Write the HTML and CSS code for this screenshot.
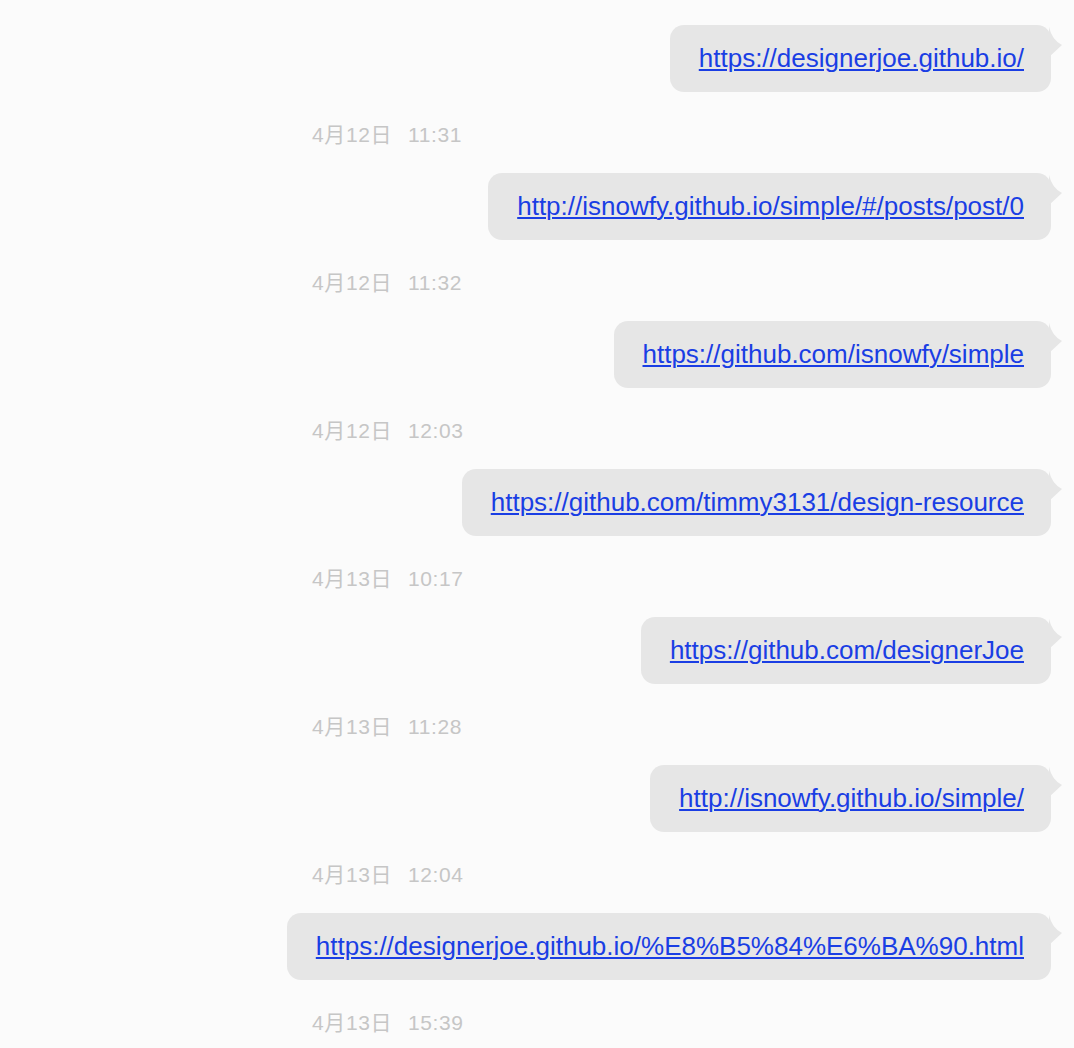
FILE: index.html
```html
<!DOCTYPE html>
<html lang="zh">
<head>
<meta charset="utf-8">
<link rel="stylesheet" href="styles.css">
</head>
<body>
<div class="chat">
  <div class="item">
    <div class="row"><div class="bubble"><a href="#">https://designerjoe.github.io/</a><svg class="tail" width="14" height="30" viewBox="0 0 14 30"><path d="M0 0 Q3 13 13 18 L0 30 Z" fill="#e6e6e6"/></svg></div></div>
    <div class="time"><span>4月12日</span><span>11:31</span></div>
  </div>
  <div class="item">
    <div class="row"><div class="bubble"><a href="#">http://isnowfy.github.io/simple/#/posts/post/0</a><svg class="tail" width="14" height="30" viewBox="0 0 14 30"><path d="M0 0 Q3 13 13 18 L0 30 Z" fill="#e6e6e6"/></svg></div></div>
    <div class="time"><span>4月12日</span><span>11:32</span></div>
  </div>
  <div class="item">
    <div class="row"><div class="bubble"><a href="#">https://github.com/isnowfy/simple</a><svg class="tail" width="14" height="30" viewBox="0 0 14 30"><path d="M0 0 Q3 13 13 18 L0 30 Z" fill="#e6e6e6"/></svg></div></div>
    <div class="time"><span>4月12日</span><span>12:03</span></div>
  </div>
  <div class="item">
    <div class="row"><div class="bubble"><a href="#">https://github.com/timmy3131/design-resource</a><svg class="tail" width="14" height="30" viewBox="0 0 14 30"><path d="M0 0 Q3 13 13 18 L0 30 Z" fill="#e6e6e6"/></svg></div></div>
    <div class="time"><span>4月13日</span><span>10:17</span></div>
  </div>
  <div class="item">
    <div class="row"><div class="bubble"><a href="#">https://github.com/designerJoe</a><svg class="tail" width="14" height="30" viewBox="0 0 14 30"><path d="M0 0 Q3 13 13 18 L0 30 Z" fill="#e6e6e6"/></svg></div></div>
    <div class="time"><span>4月13日</span><span>11:28</span></div>
  </div>
  <div class="item">
    <div class="row"><div class="bubble"><a href="#">http://isnowfy.github.io/simple/</a><svg class="tail" width="14" height="30" viewBox="0 0 14 30"><path d="M0 0 Q3 13 13 18 L0 30 Z" fill="#e6e6e6"/></svg></div></div>
    <div class="time"><span>4月13日</span><span>12:04</span></div>
  </div>
  <div class="item">
    <div class="row"><div class="bubble"><a href="#">https://designerjoe.github.io/%E8%B5%84%E6%BA%90.html</a><svg class="tail" width="14" height="30" viewBox="0 0 14 30"><path d="M0 0 Q3 13 13 18 L0 30 Z" fill="#e6e6e6"/></svg></div></div>
    <div class="time"><span>4月13日</span><span>15:39</span></div>
  </div>
</div>
</body>
</html>
```
FILE: styles.css
```css
html, body {
  margin: 0;
  padding: 0;
  background: #fbfbfb;
}
body {
  font-family: "Liberation Sans", Arial, "Noto Sans CJK SC", sans-serif;
  width: 1074px;
  height: 1048px;
  overflow: hidden;
}
.chat {
  padding-top: 25px;
}
.item {
  margin-bottom: 28px;
}
.row {
  display: flex;
  justify-content: flex-end;
  padding-right: 23px;
}
.bubble {
  position: relative;
  background: #e6e6e6;
  border-radius: 14px;
  padding: 18px 27px 19px 29px;
  font-size: 26px;
  line-height: 30px;
  white-space: nowrap;
}
.bubble a {
  color: #1a3ee4;
  text-decoration: underline;
  text-decoration-thickness: 2px;
  text-underline-offset: 2px;
}
.tail {
  position: absolute;
  right: -12px;
  top: 2px;
}
.time {
  margin-top: 33px;
  padding-left: 312px;
  font-size: 21px;
  line-height: 20px;
  letter-spacing: 0.6px;
  color: #c6c6c6;
  display: flex;
  gap: 16px;
}
```
